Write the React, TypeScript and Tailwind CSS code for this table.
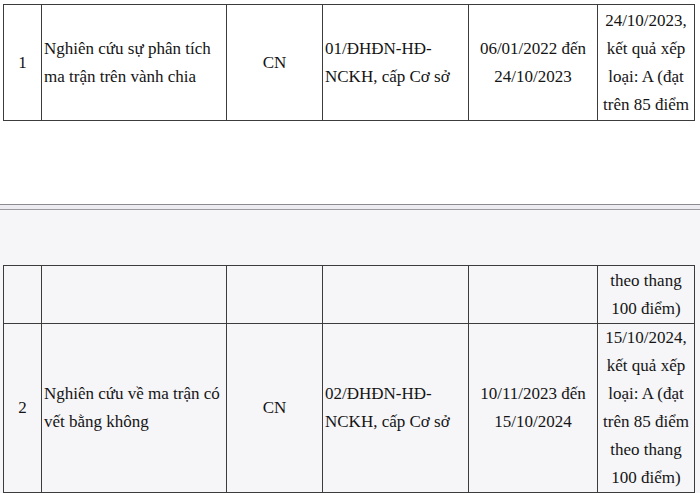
const cell = "border-[1.5px] border-[#3c3c3c] align-middle p-0";

type Row = {
  no?: string;
  title?: string[];
  role?: string;
  code?: string[];
  period?: string[];
  result?: string[];
  h: string;
};

const Cols = () => (
  <colgroup>
    <col className="w-[38px]" />
    <col className="w-[185px]" />
    <col className="w-[96px]" />
    <col className="w-[146px]" />
    <col className="w-[129px]" />
    <col />
  </colgroup>
);

const Lines = ({ lines }: { lines?: string[] }) => (
  <>
    {lines?.map((l, i) => (
      <div key={i} className="whitespace-nowrap">
        {l}
      </div>
    ))}
  </>
);

const Table = ({ rows }: { rows: Row[] }) => (
  <table className="table-fixed border-collapse w-[692px] ml-[3px]">
    <Cols />
    <tbody>
      {rows.map((r, i) => (
        <tr key={i} className={r.h}>
          <td className={cell + " text-center"}>{r.no}</td>
          <td className={cell + " pl-[2px]"}>
            <Lines lines={r.title} />
          </td>
          <td className={cell + " text-center"}>{r.role}</td>
          <td className={cell + " pl-[2px]"}>
            <Lines lines={r.code} />
          </td>
          <td className={cell + " text-center"}>
            <Lines lines={r.period} />
          </td>
          <td className={cell + " text-center"}>
            <Lines lines={r.result} />
          </td>
        </tr>
      ))}
    </tbody>
  </table>
);

export default function App() {
  return (
    <div className="w-[700px] h-[493px] overflow-hidden font-['Liberation_Serif',serif] text-[17px] leading-[28px] text-[#141414]">
      {/* cuối trang 1 */}
      <div className="h-[204px] bg-white pt-[4px]">
        <Table
          rows={[
            {
              no: "1",
              title: ["Nghiên cứu sự phân tích", "ma trận trên vành chia"],
              role: "CN",
              code: ["01/ĐHĐN-HĐ-", "NCKH, cấp Cơ sở"],
              period: ["06/01/2022 đến", "24/10/2023"],
              result: ["24/10/2023,", "kết quả xếp", "loại: A (đạt", "trên 85 điểm"],
              h: "h-[116px]",
            },
          ]}
        />
      </div>

      {/* ngắt trang */}
      <div className="h-px bg-[#8c8c90]" />
      <div className="h-[4px] bg-[#ececf1]" />
      <div className="h-px bg-[#9c9c9e]" />

      {/* đầu trang 2 */}
      <div className="h-[283px] bg-[#f6f6f9] pt-[55px]">
        <Table
          rows={[
            { result: ["theo thang", "100 điểm)"], h: "h-[58px]" },
            {
              no: "2",
              title: ["Nghiên cứu về ma trận có", "vết bằng không"],
              role: "CN",
              code: ["02/ĐHĐN-HĐ-", "NCKH, cấp Cơ sở"],
              period: ["10/11/2023 đến", "15/10/2024"],
              result: [
                "15/10/2024,",
                "kết quả xếp",
                "loại: A (đạt",
                "trên 85 điểm",
                "theo thang",
                "100 điểm)",
              ],
              h: "h-[168px]",
            },
          ]}
        />
      </div>
    </div>
  );
}
